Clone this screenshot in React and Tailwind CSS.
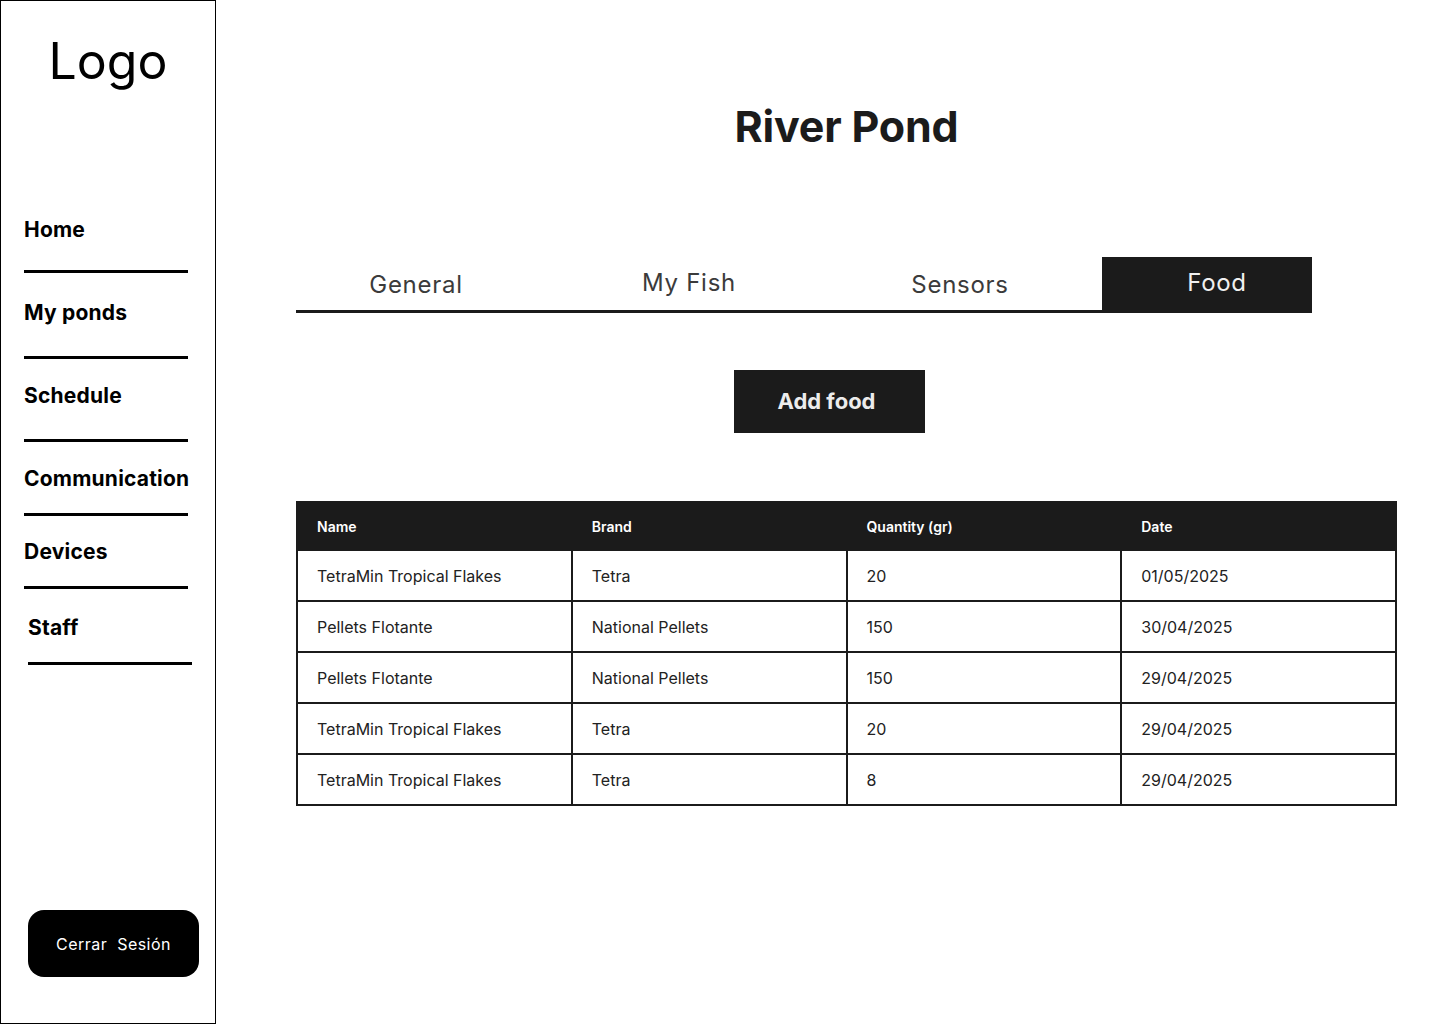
const navItems = [
  { label: "Home", mt: "mt-[217px]", gap: "mt-[28px]", indent: "ml-[23px]" },
  { label: "My ponds", mt: "mt-[28px]", gap: "mt-[31px]", indent: "ml-[23px]" },
  { label: "Schedule", mt: "mt-[25px]", gap: "mt-[31px]", indent: "ml-[23px]" },
  { label: "Communication", mt: "mt-[25px]", gap: "mt-[22px]", indent: "ml-[23px]" },
  { label: "Devices", mt: "mt-[24px]", gap: "mt-[22px]", indent: "ml-[23px]" },
  { label: "Staff", mt: "mt-[27px]", gap: "mt-[22px]", indent: "ml-[27px]" },
];

const foods = [
  ["TetraMin Tropical Flakes", "Tetra", "20", "01/05/2025"],
  ["Pellets Flotante", "National Pellets", "150", "30/04/2025"],
  ["Pellets Flotante", "National Pellets", "150", "29/04/2025"],
  ["TetraMin Tropical Flakes", "Tetra", "20", "29/04/2025"],
  ["TetraMin Tropical Flakes", "Tetra", "8", "29/04/2025"],
];

function Sidebar() {
  return (
    <aside className="relative w-[216px] h-[1024px] shrink-0 border border-black flex flex-col">
      <div className="absolute top-[28px] left-0 right-0 text-center text-[50px] leading-[64px] text-black">
        Logo
      </div>
      {navItems.map((item) => (
        <div key={item.label} className={`${item.mt} ${item.indent}`}>
          <div className="text-[21px] leading-6 font-bold tracking-[0.01em] text-black">
            {item.label}
          </div>
          <div className={`${item.gap} w-[164px] h-[3px] bg-black`}></div>
        </div>
      ))}
      <button className="mt-auto mb-[46px] ml-[27px] w-[171px] h-[67px] rounded-2xl bg-black text-white text-[16px] tracking-[0.03em]">
        Cerrar&nbsp; Sesión
      </button>
    </aside>
  );
}

function Tabs() {
  return (
    <div className="flex items-end border-b-[3px] border-[#1b1b1b] w-[806px]">
      <div className="w-[240px] text-center text-[24px] leading-[30px] tracking-[0.03em] text-[#3b3b3b] pb-[10px]">
        General
      </div>
      <div className="w-[306px] text-center text-[24px] leading-[30px] tracking-[0.03em] text-[#3b3b3b] pb-[12px]">
        My Fish
      </div>
      <div className="w-[236px] text-center text-[24px] leading-[30px] tracking-[0.03em] text-[#3b3b3b] pb-[10px]">
        Sensors
      </div>
      <div className="w-[24px]"></div>
    </div>
  );
}

function App() {
  return (
    <div className="flex w-[1440px] min-h-screen bg-white" style={{ fontFamily: "Inter, 'Liberation Sans', sans-serif" }}>
      <Sidebar />
      <main className="flex-1 pl-[80px] pr-[43px]">
        <h1 className="mt-[100px] text-center text-[43px] leading-[52px] font-bold text-[#1b1b1b] tracking-[-0.005em]">
          River Pond
        </h1>
        <div className="mt-[105px] flex items-end">
          <Tabs />
          <div className="w-[210px] h-[56px] bg-[#1b1b1b] pl-[20px] pt-[11px] text-center text-[24px] leading-[30px] tracking-[0.03em] text-[#f0f0f0]">
            Food
          </div>
        </div>
        <div className="mt-[57px] ml-[438px]">
          <button className="w-[191px] h-[63px] bg-[#1b1b1b] text-[#ececec] text-[22px] font-bold pr-[6px]">
            Add food
          </button>
        </div>
        <table className="mt-[68px] w-[1101px] border-collapse table-fixed">
          <thead>
            <tr className="bg-[#1b1b1b] h-[48px]">
              {["Name", "Brand", "Quantity (gr)", "Date"].map((h) => (
                <th key={h} className="border-2 border-[#1b1b1b] text-left pl-[19px] text-[14px] font-semibold text-white">
                  {h}
                </th>
              ))}
            </tr>
          </thead>
          <tbody>
            {foods.map((row, i) => (
              <tr key={i} className="h-[51px]">
                {row.map((cell, j) => (
                  <td key={j} className="border-2 border-[#1b1b1b] pl-[19px] text-[16px] text-[#222]">
                    {cell}
                  </td>
                ))}
              </tr>
            ))}
          </tbody>
        </table>
      </main>
    </div>
  );
}

export default App;
